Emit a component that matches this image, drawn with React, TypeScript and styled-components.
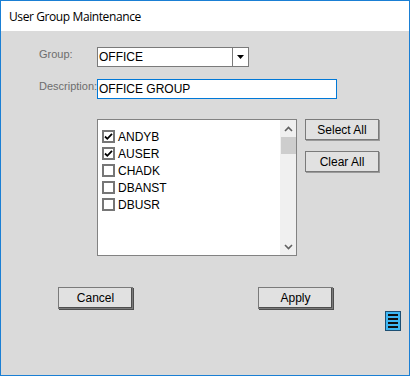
import React from 'react'
import styled, { createGlobalStyle } from 'styled-components'

const GlobalStyle = createGlobalStyle`
  html, body {
    margin: 0;
    padding: 0;
    background: #ffffff;
  }
`

const Window = styled.div`
  box-sizing: border-box;
  width: 410px;
  height: 376px;
  border: 1px solid #1a7fd4;
  background: #dadada;
  display: flex;
  flex-direction: column;
  font-family: 'Liberation Sans', Arial, sans-serif;
`

const TitleBar = styled.div`
  height: 30px;
  background: #ffffff;
  display: flex;
  align-items: center;
  padding-left: 8px;
  font-family: 'Open Sans', 'Liberation Sans', sans-serif;
  font-size: 12px;
  color: #000000;
  letter-spacing: -0.4px;
`

const Body = styled.div`
  flex: 1;
  padding: 16px 0 0 38px;
  display: flex;
  flex-direction: column;
`

const FieldRow = styled.div<{ $gap?: number }>`
  display: flex;
  align-items: center;
  margin-bottom: ${({ $gap }) => $gap ?? 0}px;
`

const Label = styled.label`
  width: 58px;
  font-size: 11px;
  color: #6d6d6d;
  white-space: nowrap;
  align-self: flex-start;
  padding-top: 1px;
`

const Combo = styled.div`
  box-sizing: border-box;
  width: 152px;
  height: 20px;
  border: 1px solid #7a7a7a;
  background: #ffffff;
  display: flex;
`

const ComboText = styled.div`
  flex: 1;
  font-size: 12px;
  line-height: 18px;
  padding-left: 1px;
  color: #000;
`

const ComboButton = styled.div`
  width: 15px;
  border-left: 1px solid #7a7a7a;
  display: flex;
  align-items: center;
  justify-content: center;
`

const TextInput = styled.div`
  box-sizing: border-box;
  width: 240px;
  height: 20px;
  border: 1px solid #0078d7;
  background: #ffffff;
  font-size: 12px;
  line-height: 18px;
  padding-left: 1px;
  color: #000;
`

const ListArea = styled.div`
  display: flex;
  margin-left: 58px;
  gap: 8px;
`

const ListBox = styled.div`
  box-sizing: border-box;
  width: 200px;
  height: 137px;
  border: 1px solid #828282;
  background: #ffffff;
  display: flex;
`

const Items = styled.div`
  flex: 1;
  padding: 8px 0 0 4px;
  display: flex;
  flex-direction: column;
`

const Item = styled.div`
  height: 17px;
  display: flex;
  align-items: center;
  font-size: 12px;
  color: #000;
`

const Check = styled.span`
  box-sizing: border-box;
  width: 13px;
  height: 13px;
  border: 2px solid #767676;
  background: #ffffff;
  margin-right: 3px;
  display: flex;
  align-items: center;
  justify-content: center;
`

const ScrollBar = styled.div`
  width: 16px;
  background: #f0f0f0;
  display: flex;
  flex-direction: column;
  align-items: center;
`

const Arrow = styled.div`
  height: 17px;
  width: 16px;
  display: flex;
  align-items: center;
  justify-content: center;
`

const Thumb = styled.div`
  width: 15px;
  height: 17px;
  background: #cdcdcd;
`

const Track = styled.div`
  flex: 1;
`

const SideButtons = styled.div`
  display: flex;
  flex-direction: column;
  gap: 11px;
`

const Button = styled.button<{ $w: number; $h: number; $strong?: boolean }>`
  box-sizing: border-box;
  width: ${({ $w }) => $w}px;
  height: ${({ $h }) => $h}px;
  margin: 0;
  padding: 0;
  background: #e1e1e1;
  border: 1px solid #7a7a7a;
  box-shadow: ${({ $strong }) => ($strong ? '1px 1px 0 #4e4e4e, inset -1px -1px 0 #4e4e4e' : '1px 1px 0 #9a9a9a')};
  font-family: 'Liberation Sans', Arial, sans-serif;
  font-size: 12px;
  color: #000;
`

const BottomRow = styled.div`
  display: flex;
  margin-top: 31px;
  padding-left: 19px;
  gap: 125px;
`

const Footer = styled.div`
  display: flex;
  justify-content: flex-end;
  padding: 2px 8px 0 0;
`

const users = [
  { name: 'ANDYB', checked: true },
  { name: 'AUSER', checked: true },
  { name: 'CHADK', checked: false },
  { name: 'DBANST', checked: false },
  { name: 'DBUSR', checked: false },
]

const CheckMark = () => (
  <svg width="9" height="9" viewBox="0 0 9 9">
    <path d="M1 4.5 L3.3 6.8 L8 1.8" fill="none" stroke="#000" strokeWidth="1.8" />
  </svg>
)

const Chevron = ({ up }: { up?: boolean }) => (
  <svg width="9" height="6" viewBox="0 0 9 6">
    <path
      d={up ? 'M1 5 L4.5 1.5 L8 5' : 'M1 1 L4.5 4.5 L8 1'}
      fill="none"
      stroke="#606060"
      strokeWidth="1.6"
    />
  </svg>
)

const MenuIcon = () => (
  <svg width="16" height="20" viewBox="0 0 16 20">
    <rect x="0.5" y="0.5" width="15" height="19" fill="#3db6f2" stroke="#1d4f73" />
    <rect x="3" y="3" width="10" height="2" fill="#111" />
    <rect x="3" y="7" width="10" height="2" fill="#111" />
    <rect x="3" y="11" width="10" height="2" fill="#111" />
    <rect x="3" y="15" width="10" height="2" fill="#111" />
  </svg>
)

export default function App() {
  return (
    <>
      <GlobalStyle />
      <Window>
        <TitleBar>User Group Maintenance</TitleBar>
        <Body>
          <FieldRow $gap={12}>
            <Label>Group:</Label>
            <Combo>
              <ComboText>OFFICE</ComboText>
              <ComboButton>
                <svg width="7" height="4" viewBox="0 0 7 4">
                  <path d="M0 0 H7 L3.5 4 Z" fill="#000" />
                </svg>
              </ComboButton>
            </Combo>
          </FieldRow>
          <FieldRow $gap={20}>
            <Label>Description:</Label>
            <TextInput>OFFICE GROUP</TextInput>
          </FieldRow>
          <ListArea>
            <ListBox>
              <Items>
                {users.map((u) => (
                  <Item key={u.name}>
                    <Check>{u.checked && <CheckMark />}</Check>
                    {u.name}
                  </Item>
                ))}
              </Items>
              <ScrollBar>
                <Arrow>
                  <Chevron up />
                </Arrow>
                <Thumb />
                <Track />
                <Arrow>
                  <Chevron />
                </Arrow>
              </ScrollBar>
            </ListBox>
            <SideButtons>
              <Button $w={74} $h={21}>Select All</Button>
              <Button $w={74} $h={21}>Clear All</Button>
            </SideButtons>
          </ListArea>
          <BottomRow>
            <Button $w={75} $h={22} $strong>Cancel</Button>
            <Button $w={75} $h={22} $strong>Apply</Button>
          </BottomRow>
          <Footer>
            <MenuIcon />
          </Footer>
        </Body>
      </Window>
    </>
  )
}
